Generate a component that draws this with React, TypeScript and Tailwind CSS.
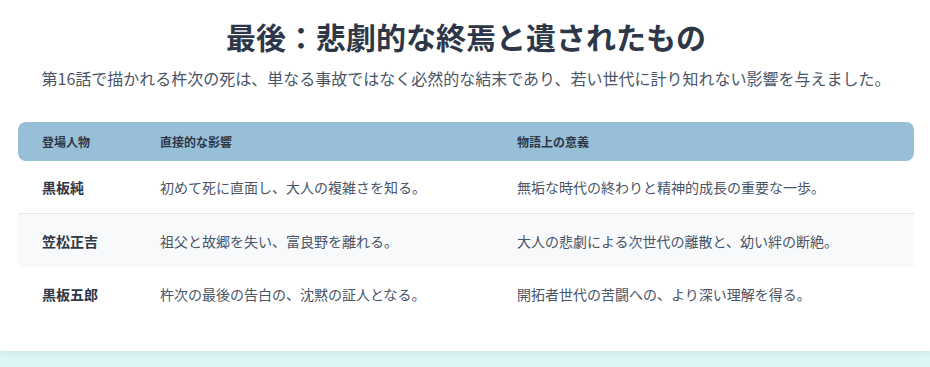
import React from 'react';

const rows = [
  {
    name: '黒板純',
    impact: '初めて死に直面し、大人の複雑さを知る。',
    meaning: '無垢な時代の終わりと精神的成長の重要な一歩。',
  },
  {
    name: '笠松正吉',
    impact: '祖父と故郷を失い、富良野を離れる。',
    meaning: '大人の悲劇による次世代の離散と、幼い絆の断絶。',
  },
  {
    name: '黒板五郎',
    impact: '杵次の最後の告白の、沈黙の証人となる。',
    meaning: '開拓者世代の苦闘への、より深い理解を得る。',
  },
];

const App: React.FC = () => {
  return (
    <div
      className="min-h-[367px] bg-gradient-to-b from-[#cdeceb] to-[#ddf7f8]"
      style={{ fontFamily: '"Noto Sans CJK JP", "Noto Sans", sans-serif' }}
    >
      <div className="bg-white pl-[18px] pr-[16px] pt-[18px] pb-[31px] shadow-[0_2px_6px_rgba(0,0,0,0.08)]">
        <h2 className="text-center text-[30px] leading-9 font-bold text-[#2d3748]">
          最後：悲劇的な終焉と遺されたもの
        </h2>
        <p className="mt-3 text-center text-base leading-6 text-[#4a5568]">
          第16話で描かれる杵次の死は、単なる事故ではなく必然的な結末であり、若い世代に計り知れない影響を与えました。
        </p>

        <div className="mt-8">
          {/* header */}
          <div className="grid h-[39px] grid-cols-[118px_357px_1fr] items-center rounded-lg bg-[#98bfd8] text-xs font-bold text-[#2d3748]">
            <div className="pl-6">登場人物</div>
            <div className="pl-6">直接的な影響</div>
            <div className="pl-6">物語上の意義</div>
          </div>

          {rows.map((row, i) => (
            <div
              key={row.name}
              className={`grid h-[53px] grid-cols-[118px_357px_1fr] items-center text-sm ${
                i === 0 ? 'border-b border-[#e5e7eb]' : ''
              } ${i === 1 ? 'bg-[#f8f9fb]' : 'bg-white'}`}
            >
              <div className="pl-6 font-bold text-[#2d3748]">{row.name}</div>
              <div className="pl-6 text-[#4a5568]">{row.impact}</div>
              <div className="pl-6 text-[#4a5568]">{row.meaning}</div>
            </div>
          ))}
        </div>
      </div>
    </div>
  );
};

export default App;
